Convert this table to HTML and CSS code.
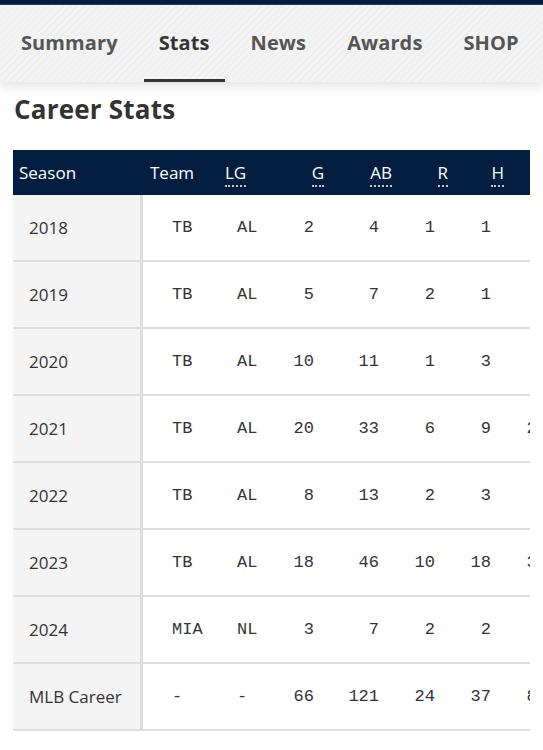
FILE: index.html
```html
<!DOCTYPE html>
<html lang="en">
<head>
    <meta charset="UTF-8">
    <meta name="viewport" content="width=device-width, initial-scale=1.0">
    <title>Career Stats</title>
    <link rel="stylesheet" href="styles.css">
</head>
<body>
    <div class="topbar"></div>
    <nav class="tabs">
        <a href="#" class="tab">Summary</a>
        <a href="#" class="tab active">Stats</a>
        <a href="#" class="tab">News</a>
        <a href="#" class="tab">Awards</a>
        <a href="#" class="tab">SHOP</a>
    </nav>

    <div class="content">
        <h2>Career Stats</h2>
        <div class="table-wrap">
            <table class="stats">
                <thead>
                    <tr>
                        <th class="season">Season</th>
                        <th class="team">Team</th>
                        <th class="lg"><abbr>LG</abbr></th>
                        <th class="num g"><abbr>G</abbr></th>
                        <th class="num ab"><abbr>AB</abbr></th>
                        <th class="num"><abbr>R</abbr></th>
                        <th class="num"><abbr>H</abbr></th>
                        <th class="num"><abbr>TB</abbr></th>
                    </tr>
                </thead>
                <tbody>
                    <tr><td class="season">2018</td><td class="team">TB</td><td class="lg">AL</td><td class="num g">2</td><td class="num">4</td><td class="num">1</td><td class="num">1</td><td class="num">1</td></tr>
                    <tr><td class="season">2019</td><td class="team">TB</td><td class="lg">AL</td><td class="num g">5</td><td class="num">7</td><td class="num">2</td><td class="num">1</td><td class="num">1</td></tr>
                    <tr><td class="season">2020</td><td class="team">TB</td><td class="lg">AL</td><td class="num g">10</td><td class="num">11</td><td class="num">1</td><td class="num">3</td><td class="num">6</td></tr>
                    <tr><td class="season">2021</td><td class="team">TB</td><td class="lg">AL</td><td class="num g">20</td><td class="num">33</td><td class="num">6</td><td class="num">9</td><td class="num">21</td></tr>
                    <tr><td class="season">2022</td><td class="team">TB</td><td class="lg">AL</td><td class="num g">8</td><td class="num">13</td><td class="num">2</td><td class="num">3</td><td class="num">6</td></tr>
                    <tr><td class="season">2023</td><td class="team">TB</td><td class="lg">AL</td><td class="num g">18</td><td class="num">46</td><td class="num">10</td><td class="num">18</td><td class="num">36</td></tr>
                    <tr><td class="season">2024</td><td class="team">MIA</td><td class="lg">NL</td><td class="num g">3</td><td class="num">7</td><td class="num">2</td><td class="num">2</td><td class="num">4</td></tr>
                    <tr><td class="season">MLB Career</td><td class="team">-</td><td class="lg">-</td><td class="num g">66</td><td class="num">121</td><td class="num">24</td><td class="num">37</td><td class="num">83</td></tr>
                </tbody>
            </table>
        </div>
    </div>
</body>
</html>
```

FILE: styles.css
```css
body {
    margin: 0;
    font-family: "Open Sans", Lato, sans-serif;
    color: #333;
    background: white;
    overflow: hidden;
}
.topbar {
    height: 4px;
    background-color: #041e42;
    border-bottom: 1px solid #2b3f5e;
}
.tabs {
    display: flex;
    gap: 11px;
    height: 77px;
    padding-left: 6px;
    background-color: #f3f3f3;
    background-image: repeating-linear-gradient(135deg, rgba(0, 0, 0, 0.025) 0 1px, transparent 1px 5px);
    box-shadow: 0 4px 10px rgba(0, 0, 0, 0.12);
    position: relative;
    white-space: nowrap;
}
.tab {
    display: flex;
    align-items: center;
    padding: 0 15px;
    font-size: 20px;
    letter-spacing: 0.1px;
    font-weight: bold;
    color: #555;
    text-decoration: none;
    border-bottom: 3px solid transparent;
}
.tab.active {
    color: #333;
    border-bottom-color: #333;
}
.content {
    padding: 0 13px;
}
h2 {
    margin: 0;
    padding: 9px 0 0 1px;
    height: 59px;
    font-size: 26px;
    letter-spacing: 0.2px;
    font-weight: bold;
    color: #333;
}
.table-wrap {
    overflow: hidden;
}
.stats {
    border-collapse: separate;
    border-spacing: 0;
    table-layout: fixed;
    width: 557px;
}
.stats th {
    height: 45px;
    padding: 0;
    background-color: #041e42;
    color: white;
    font-size: 17px;
    font-weight: normal;
    text-align: left;
    box-sizing: border-box;
}
.stats abbr {
    text-decoration: none;
    border-bottom: 2px dotted rgba(255, 255, 255, 0.75);
    padding-bottom: 1px;
}
.stats td {
    height: 67px;
    padding: 0;
    font-family: "Liberation Mono", monospace;
    font-size: 17px;
    color: #333;
    border-bottom: 2px solid #ddd;
    box-sizing: border-box;
}
.stats .season {
    width: 130px;
    padding-left: 6px;
}
.stats td.season {
    padding-left: 16px;
    font-family: "Open Sans", Lato, sans-serif;
    background-color: #f4f4f4;
    border-right: 3px solid #ddd;
}
.stats .team {
    width: 72px;
    padding-left: 7px;
}
.stats td.team {
    padding-left: 29px;
}
.stats .lg {
    width: 65px;
    padding-left: 10px;
}
.stats td.lg {
    padding-left: 22px;
}
.stats .num {
    width: 56px;
    text-align: right;
    padding-right: 12px;
}
.stats .ab {
    width: 68px;
}
.stats td.num {
    padding-right: 25px;
}
.stats td.g {
    padding-right: 22px;
}
```
